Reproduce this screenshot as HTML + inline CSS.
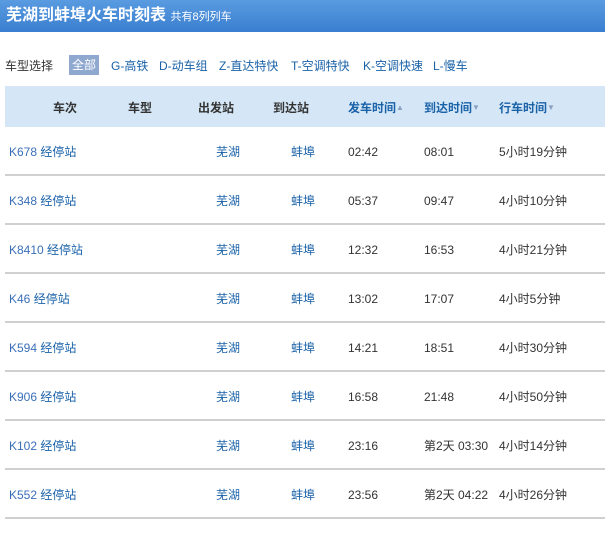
<!DOCTYPE html>
<html><head><meta charset="utf-8"><style>
body{margin:0;width:605px;height:534px;background:#fff;font-family:"Liberation Sans","Noto Sans CJK SC",sans-serif;font-size:12px;position:relative;overflow:hidden}
.bar{position:absolute;left:0;top:0;width:605px;height:32px;background:linear-gradient(#5a9be0,#3a7fd0)}
.t{position:absolute;left:6px;top:6px;color:#fff;font-size:16px;line-height:20px;font-weight:bold;white-space:nowrap}
.t span{font-size:11px;font-weight:normal}
.a{position:absolute;white-space:nowrap;line-height:16px}
.blue{color:#1a62a8}
.hd{position:absolute;left:5px;top:86px;width:600px;height:41px;background:#d5e7f7}
.line{position:absolute;left:5px;width:600px;height:2px;background:#d0d0d0}
.h{position:absolute;top:100px;font-weight:bold;color:#333;font-size:12px;line-height:16px}
.hb{color:#1a62a8}
.tri{font-size:8px;color:#8aa0c0;vertical-align:top}
.c{color:#333}
</style></head><body>
<div class="bar"></div>
<div class="t">芜湖到蚌埠火车时刻表 <span>共有8列列车</span></div>
<div class="a c" style="left:5px;top:58px">车型选择</div>
<div class="a" style="left:69px;top:55px;width:30px;height:20px;background:#8fa8d0;color:#fff;text-align:center;line-height:20px">全部</div>
<div class="a blue" style="left:111px;top:58px">G-高铁</div>
<div class="a blue" style="left:159px;top:58px">D-动车组</div>
<div class="a blue" style="left:219px;top:58px">Z-直达特快</div>
<div class="a blue" style="left:291px;top:58px">T-空调特快</div>
<div class="a blue" style="left:363px;top:58px">K-空调快速</div>
<div class="a blue" style="left:433px;top:58px">L-慢车</div>
<div class="hd"></div>
<div class="h" style="left:53px">车次</div>
<div class="h" style="left:128px">车型</div>
<div class="h" style="left:198px">出发站</div>
<div class="h" style="left:273px">到达站</div>
<div class="h hb" style="left:348px">发车时间<span class="tri">▲</span></div>
<div class="h hb" style="left:424px">到达时间<span class="tri">▼</span></div>
<div class="h hb" style="left:499px">行车时间<span class="tri">▼</span></div>
<div id="rows"></div>
<script>
var d=[["K678","02:42","08:01","5小时19分钟"],["K348","05:37","09:47","4小时10分钟"],["K8410","12:32","16:53","4小时21分钟"],["K46","13:02","17:07","4小时5分钟"],["K594","14:21","18:51","4小时30分钟"],["K906","16:58","21:48","4小时50分钟"],["K102","23:16","第2天 03:30","4小时14分钟"],["K552","23:56","第2天 04:22","4小时26分钟"]];
var h="";
d.forEach(function(r,i){var y=144+i*49;
h+='<div class="a" style="left:9px;top:'+y+'px;color:#3a6fb8">'+r[0]+' <span class="blue">经停站</span></div>';
h+='<div class="a blue" style="left:216px;top:'+y+'px">芜湖</div>';
h+='<div class="a blue" style="left:291px;top:'+y+'px">蚌埠</div>';
h+='<div class="a c" style="left:348px;top:'+y+'px">'+r[1]+'</div>';
h+='<div class="a c" style="left:424px;top:'+y+'px">'+r[2]+'</div>';
h+='<div class="a c" style="left:499px;top:'+y+'px">'+r[3]+'</div>';
h+='<div class="line" style="top:'+(174+i*49)+'px"></div>';});
document.getElementById("rows").innerHTML=h;
</script>
</body></html>
